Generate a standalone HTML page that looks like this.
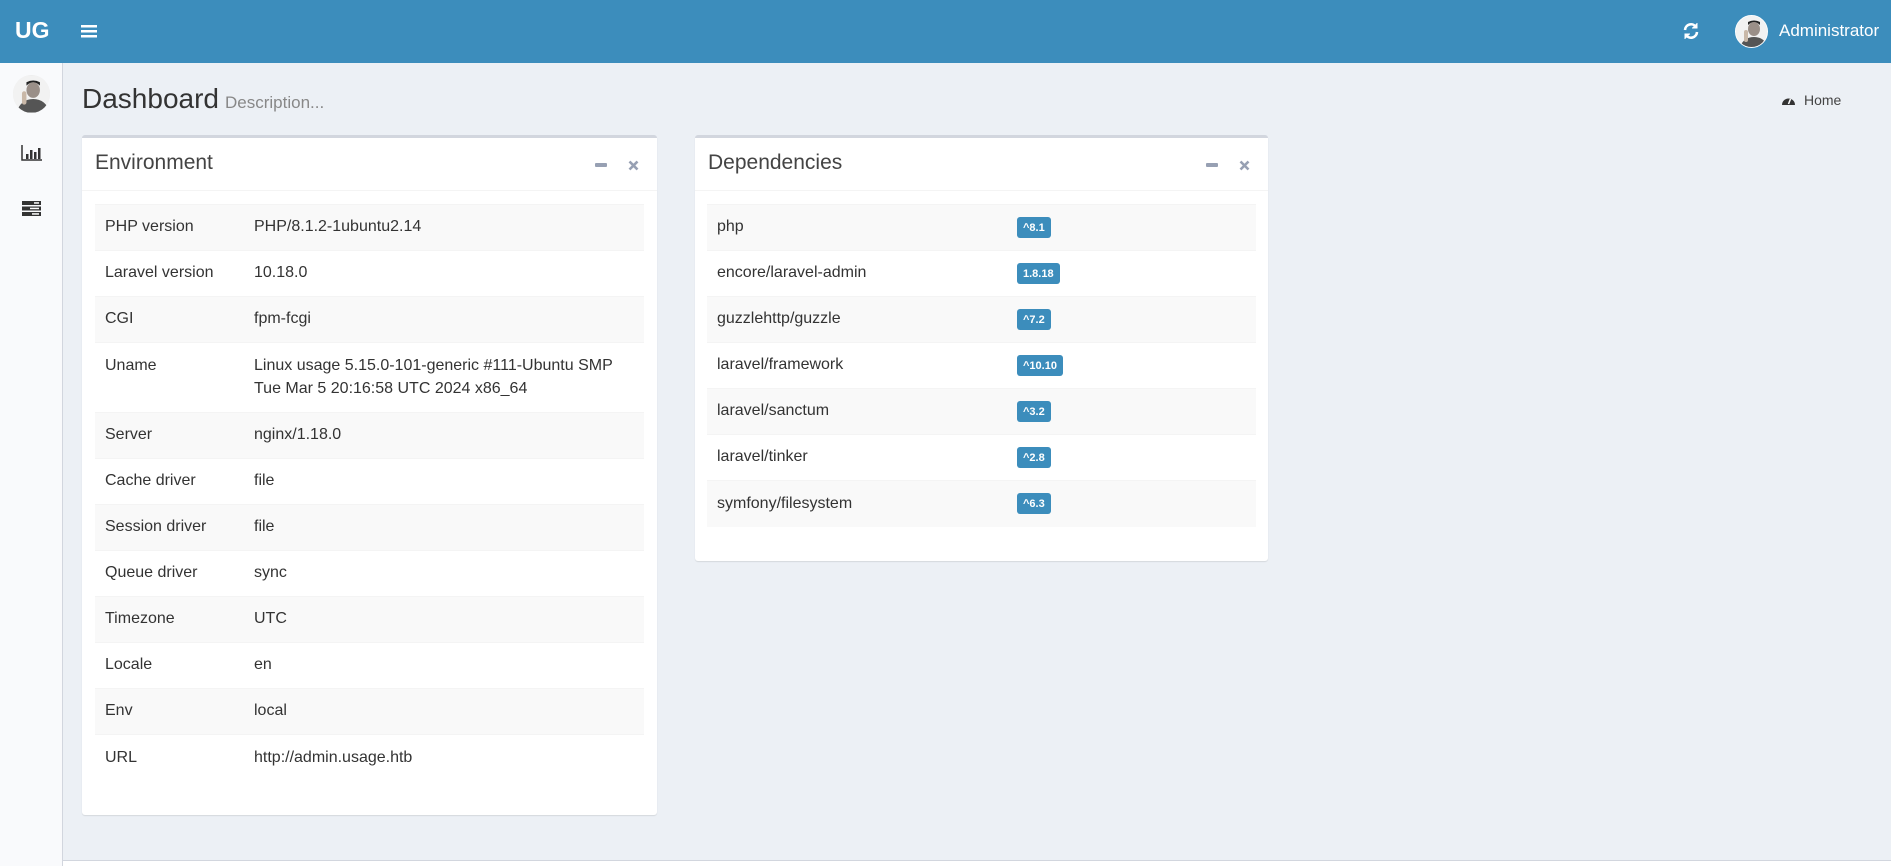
<!DOCTYPE html>
<html><head><meta charset="utf-8"><style>
*{box-sizing:border-box;margin:0;padding:0}
body{width:1891px;height:866px;overflow:hidden;background:#ecf0f5;font-family:"Liberation Sans",sans-serif;color:#333;position:relative}
.hdr{position:absolute;left:0;top:0;width:1891px;height:63px;background:#3c8dbc;color:#fff}
.logo{position:absolute;left:15px;top:17px;font-size:23px;font-weight:bold}
.side{position:absolute;left:0;top:63px;width:63px;height:803px;background:#f9fafc;border-right:1px solid #d2d6de}
.av{position:absolute;border-radius:50%;background:#e8e8e8;overflow:hidden}
.h1{position:absolute;left:82px;top:83px;font-size:28px;color:#333}
.h1 small{font-size:17px;color:#888;margin-left:6px}
.bc{position:absolute;left:1781px;top:92px;font-size:14px;color:#444}
.box{position:absolute;background:#fff;border-top:3px solid #d2d6de;border-radius:3px;box-shadow:0 1px 1px rgba(0,0,0,.1)}
.bh{height:53px;border-bottom:1px solid #f4f4f4;position:relative}
.bh span{position:absolute;left:13px;top:13px;font-size:21px;color:#444}
.tools{position:absolute;right:18px;top:22px;width:44px;height:12px}
.tools .m{position:absolute;left:0;top:3px;width:12px;height:4px;background:#97a0b3;border-radius:1px}
.tools svg{position:absolute;right:0;top:0}
table{position:absolute;border-collapse:collapse;font-size:16px;color:#333}
td{border-top:1px solid #f4f4f4;padding:0 10px;height:46px;vertical-align:middle;line-height:1.4}
tr:nth-child(odd) td{background:#f9f9f9}
.badge{display:inline-block;background:#3c8dbc;color:#fff;font-size:11px;font-weight:bold;padding:5px 6px 4px;line-height:12px;border-radius:3px;vertical-align:middle}
.foot{position:absolute;left:63px;top:860px;width:1828px;height:6px;background:#fff;border-top:1px solid #d2d6de}
</style></head><body>
<div class="hdr">
<div class="logo">UG</div>
<svg style="position:absolute;left:81px;top:24px" width="16" height="14"><rect y="1" width="16" height="2.5" fill="#fff"/><rect y="6" width="16" height="2.5" fill="#fff"/><rect y="11" width="16" height="2.5" fill="#fff"/></svg>
<svg style="position:absolute;left:1682px;top:22px" width="18" height="18" viewBox="0 0 18 18" fill="none" stroke="#fff" stroke-width="2.6"><path d="M3 8a6 6 0 0 1 11-3"/><path d="M15 10a6 6 0 0 1-11 3"/><path d="M15 1v5h-5" fill="#fff" stroke-width="1"/><path d="M3 17v-5h5" fill="#fff" stroke-width="1"/></svg>
<div class="av" style="left:1735px;top:15px;width:33px;height:33px;border:1px solid #fff"><svg width="33" height="33" viewBox="0 0 33 33"><rect width="33" height="33" fill="#f2f2f2"/><ellipse cx="18" cy="13" rx="6" ry="7" fill="#9a8f88"/><path d="M12 9q6-6 12 0v-3q-6-3-12 0z" fill="#222"/><path d="M3 33q4-12 15-12t15 12z" fill="#555"/><rect x="8" y="14" width="4" height="12" rx="2" fill="#c9b8a8"/></svg></div>
<div style="position:absolute;left:1779px;top:21px;font-size:17px">Administrator</div>
</div>
<div class="side">
<div class="av" style="left:13px;top:12px;width:37px;height:38px"><svg width="37" height="38" viewBox="0 0 33 33"><rect width="33" height="33" fill="#f2f2f2"/><ellipse cx="18" cy="13" rx="6" ry="7" fill="#9a8f88"/><path d="M12 9q6-6 12 0v-3q-6-3-12 0z" fill="#222"/><path d="M3 33q4-12 15-12t15 12z" fill="#555"/><rect x="8" y="14" width="4" height="12" rx="2" fill="#c9b8a8"/></svg></div>
<svg style="position:absolute;left:21px;top:82px" width="21" height="16"><path d="M1 0v15h20" stroke="#333" stroke-width="1.5" fill="none"/><rect x="5" y="9" width="2.5" height="5" fill="#333"/><rect x="9" y="5" width="2.5" height="9" fill="#333"/><rect x="13" y="7" width="2.5" height="7" fill="#333"/><rect x="17" y="3" width="2.5" height="11" fill="#333"/></svg>
<svg style="position:absolute;left:22px;top:138px" width="19" height="15"><rect y="0" width="19" height="4" fill="#333"/><rect y="5.5" width="19" height="4" fill="#333"/><rect y="11" width="19" height="4" fill="#333"/><rect x="12" y="1.2" width="5" height="1.5" fill="#fff"/><rect x="8" y="6.7" width="9" height="1.5" fill="#fff"/><rect x="10" y="12.2" width="7" height="1.5" fill="#fff"/></svg>
</div>
<div class="h1">Dashboard<small>Description...</small></div>
<div class="bc"><svg width="15" height="12" style="vertical-align:-1px;margin-right:8px" viewBox="0 0 15 12"><path d="M1 11a6.5 6.5 0 1 1 13 0z" fill="#333"/><path d="M7.5 10L9.5 5" stroke="#fff" stroke-width="1.5"/></svg>Home</div>

<div class="box" style="left:82px;top:135px;width:575px;height:680px">
<div class="bh"><span>Environment</span><div class="tools"><div class="m"></div><svg width="11" height="11" viewBox="0 0 11 11"><path d="M1.5 1.5l8 8M9.5 1.5l-8 8" stroke="#97a0b3" stroke-width="2.6"/></svg></div></div>
<table style="left:13px;top:66px;width:549px">
<tr><td style="width:149px">PHP version</td><td>PHP/8.1.2-1ubuntu2.14</td></tr>
<tr><td>Laravel version</td><td>10.18.0</td></tr>
<tr><td>CGI</td><td>fpm-fcgi</td></tr>
<tr><td style="height:70px;vertical-align:top;padding-top:12px">Uname</td><td style="height:70px">Linux usage 5.15.0-101-generic #111-Ubuntu SMP<br>Tue Mar 5 20:16:58 UTC 2024 x86_64</td></tr>
<tr><td>Server</td><td>nginx/1.18.0</td></tr>
<tr><td>Cache driver</td><td>file</td></tr>
<tr><td>Session driver</td><td>file</td></tr>
<tr><td>Queue driver</td><td>sync</td></tr>
<tr><td>Timezone</td><td>UTC</td></tr>
<tr><td>Locale</td><td>en</td></tr>
<tr><td>Env</td><td>local</td></tr>
<tr><td>URL</td><td>http://admin.usage.htb</td></tr>
</table>
</div>

<div class="box" style="left:695px;top:135px;width:573px;height:426px">
<div class="bh"><span>Dependencies</span><div class="tools"><div class="m"></div><svg width="11" height="11" viewBox="0 0 11 11"><path d="M1.5 1.5l8 8M9.5 1.5l-8 8" stroke="#97a0b3" stroke-width="2.6"/></svg></div></div>
<table style="left:12px;top:66px;width:549px">
<tr><td style="width:300px">php</td><td><span class="badge">^8.1</span></td></tr>
<tr><td>encore/laravel-admin</td><td><span class="badge">1.8.18</span></td></tr>
<tr><td>guzzlehttp/guzzle</td><td><span class="badge">^7.2</span></td></tr>
<tr><td>laravel/framework</td><td><span class="badge">^10.10</span></td></tr>
<tr><td>laravel/sanctum</td><td><span class="badge">^3.2</span></td></tr>
<tr><td>laravel/tinker</td><td><span class="badge">^2.8</span></td></tr>
<tr><td>symfony/filesystem</td><td><span class="badge">^6.3</span></td></tr>
</table>
</div>
<div class="foot"></div>
</body></html>
